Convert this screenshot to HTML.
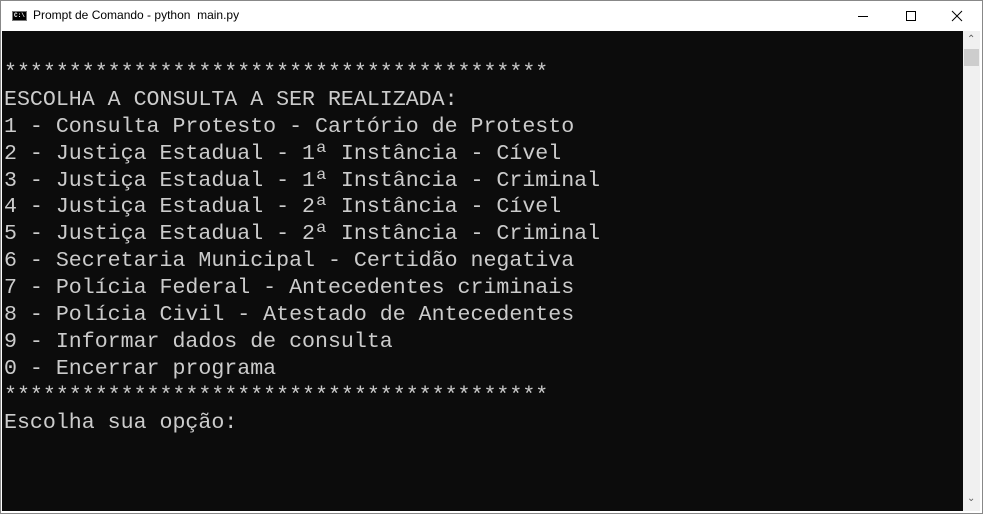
<!DOCTYPE html>
<html><head><meta charset="utf-8"><style>
html,body{margin:0;padding:0;width:983px;height:514px;overflow:hidden;background:#f0f0f0}
.win{position:absolute;left:0;top:0;width:981px;height:512px;border:1px solid #888;background:#fff}
.title{position:absolute;left:0;top:0;width:981px;height:30px;background:#fff}
.title .t{position:absolute;left:32px;top:7px;font:12px "Liberation Sans",sans-serif;color:#000}
.icon{position:absolute;left:11px;top:10px;width:15px;height:10px;background:#000;border:1px solid #777;box-sizing:border-box}
.icon span{position:absolute;left:1px;top:0;font:bold 6px "Liberation Mono",monospace;color:#fff;line-height:8px}
.con{position:absolute;left:1px;top:30px;width:961px;height:480px;background:#0c0c0c;overflow:hidden}
pre{margin:0;position:absolute;left:2px;top:2px;font:21.6px/26.9px "Liberation Mono","DejaVu Sans Mono",monospace;color:#cccccc}
.sb{position:absolute;left:962px;top:30px;width:17px;height:480px;background:#f0f0f0}
.thumb{position:absolute;left:1px;top:18px;width:15px;height:17px;background:#cdcdcd}
.ar{position:absolute;left:4px;font:10px "Liberation Sans",sans-serif;color:#606060}
</style></head><body>
<div class="win">
<div class="title"><div class="icon"><span>C:\</span></div><div class="t">Prompt de Comando - python&nbsp; main.py</div>
<svg style="position:absolute;left:855px;top:9px" width="110" height="14">
<line x1="2" y1="6.5" x2="12" y2="6.5" stroke="#000" stroke-width="1"/>
<rect x="50.5" y="1.5" width="9" height="9" fill="none" stroke="#000"/>
<line x1="96" y1="1" x2="106" y2="11" stroke="#000"/><line x1="106" y1="1" x2="96" y2="11" stroke="#000"/>
</svg></div>
<div class="con"><pre>

******************************************
ESCOLHA A CONSULTA A SER REALIZADA:
1 - Consulta Protesto - Cartório de Protesto
2 - Justiça Estadual - 1ª Instância - Cível
3 - Justiça Estadual - 1ª Instância - Criminal
4 - Justiça Estadual - 2ª Instância - Cível
5 - Justiça Estadual - 2ª Instância - Criminal
6 - Secretaria Municipal - Certidão negativa
7 - Polícia Federal - Antecedentes criminais
8 - Polícia Civil - Atestado de Antecedentes
9 - Informar dados de consulta
0 - Encerrar programa
******************************************
Escolha sua opção:</pre></div>
<div class="sb"><div class="ar" style="top:3px">&#8963;</div><div class="thumb"></div><div class="ar" style="top:462px">&#8964;</div></div>
</div>
</body></html>
